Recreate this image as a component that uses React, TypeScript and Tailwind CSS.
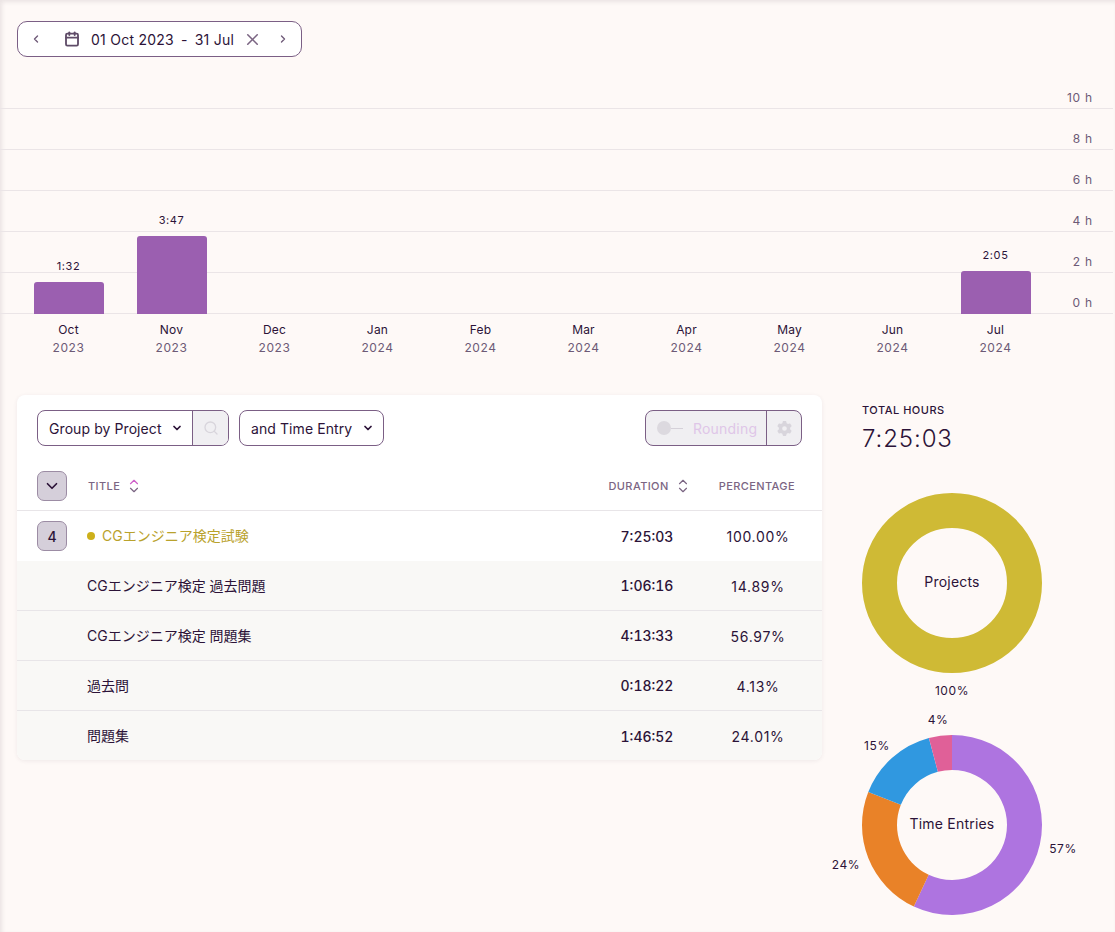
import React from 'react';
import { Calendar, ChevronDown, ChevronLeft, ChevronRight, ChevronUp, Search, X } from 'lucide-react';
import { FaGear } from 'react-icons/fa6';

const months = [
  { m: 'Oct', y: '2023', label: '1:32', h: 32 },
  { m: 'Nov', y: '2023', label: '3:47', h: 78 },
  { m: 'Dec', y: '2023' },
  { m: 'Jan', y: '2024' },
  { m: 'Feb', y: '2024' },
  { m: 'Mar', y: '2024' },
  { m: 'Apr', y: '2024' },
  { m: 'May', y: '2024' },
  { m: 'Jun', y: '2024' },
  { m: 'Jul', y: '2024', label: '2:05', h: 43 },
];

const ticks = ['10 h', '8 h', '6 h', '4 h', '2 h', '0 h'];

const rows = [
  { title: 'CGエンジニア検定 過去問題', duration: '1:06:16', pct: '14.89%' },
  { title: 'CGエンジニア検定 問題集', duration: '4:13:33', pct: '56.97%' },
  { title: '過去問', duration: '0:18:22', pct: '4.13%' },
  { title: '問題集', duration: '1:46:52', pct: '24.01%' },
];

const slices = [
  { pct: 56.97, color: '#ae74e0' },
  { pct: 24.01, color: '#e98228' },
  { pct: 14.89, color: '#3098e0' },
  { pct: 4.13, color: '#e06098' },
];

// donut segment path, angles in percent clockwise from the top
const arc = (from: number, to: number) => {
  const pt = (p: number, r: number) => {
    const a = (p / 100) * Math.PI * 2;
    return `${100 + r * Math.sin(a)} ${100 - r * Math.cos(a)}`;
  };
  const large = to - from > 50 ? 1 : 0;
  return `M${pt(from, 90)} A90 90 0 ${large} 1 ${pt(to, 90)} L${pt(to, 55)} A55 55 0 ${large} 0 ${pt(from, 55)} Z`;
};

const SortIcon = ({ active }: { active?: boolean }) => (
  <span className="flex flex-col items-center ml-[7px]">
    <ChevronUp className={`w-[14px] h-[14px] -mb-[6px] ${active ? 'text-[#cf5fc9]' : 'text-[#7b6583]'}`} strokeWidth={2} />
    <ChevronDown className="w-[14px] h-[14px] text-[#7b6583]" strokeWidth={2} />
  </span>
);

const Caret = () => <ChevronDown className="w-[12px] h-[12px] text-[#2c1338]" strokeWidth={3.5} />;

const App = () => {
  let acc = 0;
  return (
    <div className="relative h-[932px] overflow-hidden bg-[#fef9f7] text-[#2c1338] shadow-[inset_2px_2px_4px_rgba(60,40,60,0.1)] font-['Inter','Noto_Sans_CJK_JP',sans-serif]">
      {/* date range */}
      <div className="pt-[21px] pl-[17px]">
        <div className="flex items-center w-[285px] h-[36px] bg-white border border-[#7b5f85] rounded-[10px] text-[14px]">
          <ChevronLeft className="w-[12px] h-[12px] ml-[12px] text-[#6f5a78]" strokeWidth={2.75} />
          <Calendar className="w-[16px] h-[16px] ml-[22px] text-[#5f4c68]" strokeWidth={2.75} />
          <span className="ml-[11px] w-[150px] whitespace-nowrap tracking-[0.25px]">
            01 Oct 2023<span className="mx-[7px]">-</span>31 Jul
          </span>
          <X className="w-[19px] h-[19px] ml-[2px] text-[#7b6583]" strokeWidth={2} />
          <ChevronRight className="w-[12px] h-[12px] ml-[15px] text-[#6f5a78]" strokeWidth={2.75} />
        </div>
      </div>

      {/* chart */}
      <div className="grid mt-[11px] w-[1113px]">
        <div className="col-start-1 row-start-1 flex flex-col">
          {ticks.map((t) => (
            <div key={t} className="flex items-start justify-end h-[41px] border-b border-[#ebe5e7] pr-[20px]">
              <span className="text-[12px] leading-[16px] mt-[22px] text-[#6d5a76] tracking-[0.8px]">{t}</span>
            </div>
          ))}
        </div>
        <div className="col-start-1 row-start-1 flex items-end pl-[17px]">
          {months.map((c) => (
            <div key={c.m + c.y} className="w-[103px] flex flex-col items-center">
              {c.label && <span className="text-[11px] leading-[14px] mb-[9px] tracking-[0.6px]">{c.label}</span>}
              {c.h && <div className="w-[70px] bg-[#9b5fb0] rounded-t-[3px]" style={{ height: c.h }} />}
            </div>
          ))}
        </div>
      </div>
      <div className="flex pl-[17px] mt-[8px]">
        {months.map((c) => (
          <div key={c.m + c.y} className="w-[103px] flex flex-col items-center">
            <span className="text-[12px] leading-[16px] tracking-[0.2px]">{c.m}</span>
            <span className="text-[12px] leading-[16px] mt-[2px] text-[#6d5a76] tracking-[0.6px]">{c.y}</span>
          </div>
        ))}
      </div>

      <div className="flex pl-[17px] mt-[39px]">
        {/* table card */}
        <div className="w-[805px] h-[365px] bg-white rounded-[8px] overflow-hidden shadow-[0_1px_4px_rgba(60,40,60,0.08)]">
          <div className="flex items-center h-[51px] pt-[15px] px-[20px]">
            <div className="flex h-[36px] border border-[#7b5f85] rounded-[8px] overflow-hidden text-[14px]">
              <div className="flex items-center w-[155px] pl-[11px] border-r border-[#7b5f85] tracking-[0.08px]">
                <span>Group by Project</span>
                <span className="ml-[9px]"><Caret /></span>
              </div>
              <div className="flex items-center justify-center w-[35px] bg-[#f0eff2]">
                <Search className="w-[16px] h-[16px] text-[#d8d5dc]" strokeWidth={2} />
              </div>
            </div>
            <div className="flex items-center h-[36px] w-[145px] ml-[10px] pl-[11px] border border-[#7b5f85] rounded-[8px] text-[14px] tracking-[0.08px]">
              <span>and Time Entry</span>
              <span className="ml-[10px]"><Caret /></span>
            </div>
            <div className="flex h-[36px] w-[157px] ml-auto border border-[#7b5f85] rounded-[8px] overflow-hidden bg-[#f0eff2]">
              <div className="flex items-center w-[121px] pl-[11px] border-r border-[#7b5f85]">
                <span className="w-[14px] h-[14px] rounded-full bg-[#dcd9df]" />
                <span className="w-[12px] h-[1px] bg-[#d5d1d9]" />
                <span className="ml-[10px] text-[14px] tracking-[0.2px] text-[#dfc6e8]">Rounding</span>
              </div>
              <div className="flex flex-1 items-center justify-center">
                <FaGear className="w-[15px] h-[15px] text-[#d8d5dc]" />
              </div>
            </div>
          </div>

          <div className="flex items-center h-[65px] pt-[15px] px-[20px] border-b border-[#e8e5e8] text-[11px] font-medium text-[#7b6583] tracking-[0.4px]">
            <div className="flex items-center justify-center w-[30px] h-[30px] rounded-[7px] bg-[#d5cfda] border border-[#9c8ca4]">
              <ChevronDown className="w-[18px] h-[18px] text-[#2c1338]" strokeWidth={2.25} />
            </div>
            <span className="ml-[21px] mt-[1px]">TITLE</span>
            <SortIcon active />
            <div className="ml-auto flex items-center">
              <span className="mt-[1px]">DURATION</span>
              <SortIcon />
            </div>
            <span className="ml-[29px] mr-[7px] mt-[1px]">PERCENTAGE</span>
          </div>

          <div className="flex items-center h-[50px] pl-[20px] pr-[20px]">
            <div className="flex items-center justify-center w-[30px] h-[30px] rounded-[7px] bg-[#d5cfda] border border-[#9c8ca4] text-[14px] font-medium">4</div>
            <span className="ml-[20px] w-[8px] h-[8px] rounded-full bg-[#cdb01a]" />
            <span className="ml-[7px] mb-[1px] text-[14px] text-[#b9a22c]">CGエンジニア検定試験</span>
            <span className="ml-auto w-[80px] text-center text-[14px] font-[450] tabular-nums mr-[33px]">7:25:03</span>
            <span className="w-[76px] text-center text-[14px] tracking-[0.7px] mr-[6px]">100.00%</span>
          </div>

          {rows.map((r, i) => (
            <div key={r.title} className={`flex items-center h-[50px] pl-[70px] pr-[20px] bg-[#f9f8f6] ${i < rows.length - 1 ? 'border-b border-[#e8e5e8]' : ''}`}>
              <span className="text-[14px] mb-[1px]">{r.title}</span>
              <span className="ml-auto w-[80px] text-center text-[14px] font-[450] tabular-nums mr-[33px]">{r.duration}</span>
              <span className="w-[76px] text-center text-[14px] tracking-[0.7px] mr-[6px] mt-[1px]">{r.pct}</span>
            </div>
          ))}
        </div>

        {/* totals */}
        <div className="ml-[40px] w-[220px] -mr-[20px]">
          <div className="pt-[8px] text-[11px] leading-[14px] font-medium tracking-[0.5px]">TOTAL HOURS</div>
          <div className="mt-[7px] text-[24px] leading-[30px] font-light tracking-[0.9px]">7:25:03</div>
          <svg width="200" height="210" viewBox="0 0 200 210" className="mt-[29px] -ml-[10px] block overflow-visible">
            <circle cx="100" cy="100" r="72.5" fill="none" stroke="#cfba35" strokeWidth="35" />
            <text x="100" y="104" textAnchor="middle" fontSize="14" letterSpacing="0.2" fill="#2c1338">Projects</text>
            <text x="100" y="212" textAnchor="middle" fontSize="12" fill="#2c1338" letterSpacing="0.6">100%</text>
          </svg>
          <svg width="200" height="200" viewBox="0 0 200 200" className="mt-[32px] -ml-[10px] block overflow-visible">
            {slices.map((s) => {
              const d = arc(acc, acc + s.pct);
              acc += s.pct;
              return <path key={s.color} d={d} fill={s.color} />;
            })}
            <text x="100" y="104" textAnchor="middle" fontSize="14" letterSpacing="0.2" fill="#2c1338">Time Entries</text>
            <text x="211" y="128" textAnchor="middle" fontSize="12" fill="#2c1338" letterSpacing="0.6">57%</text>
            <text x="-6" y="144" textAnchor="middle" fontSize="12" fill="#2c1338" letterSpacing="0.6">24%</text>
            <text x="25" y="25" textAnchor="middle" fontSize="12" fill="#2c1338" letterSpacing="0.6">15%</text>
            <text x="86" y="-1" textAnchor="middle" fontSize="12" fill="#2c1338" letterSpacing="0.6">4%</text>
          </svg>
        </div>
      </div>
    </div>
  );
};

export default App;
